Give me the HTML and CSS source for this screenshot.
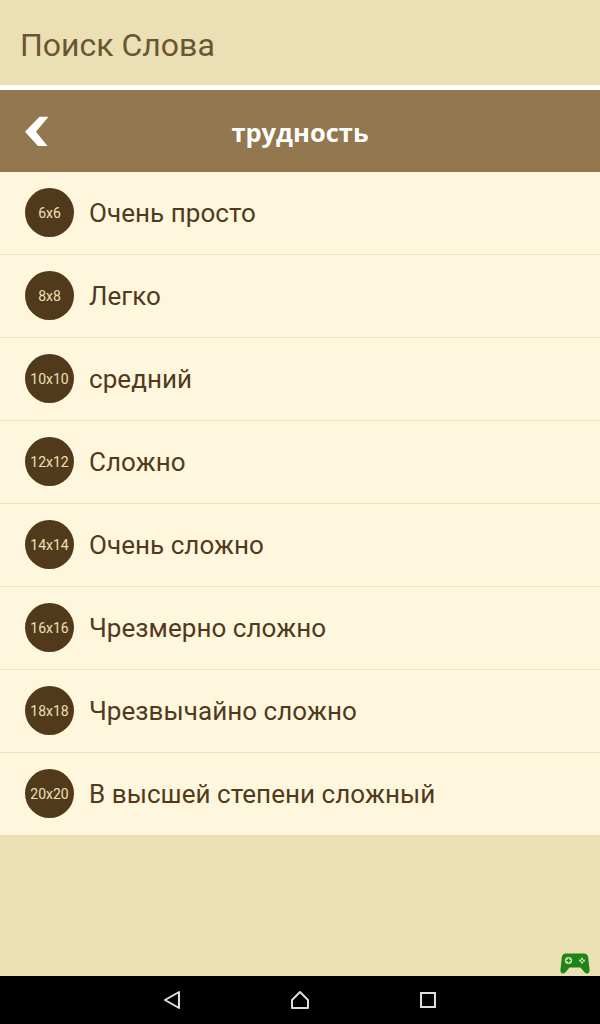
FILE: index.html
```html
<!DOCTYPE html>
<html lang="ru">

<head>
    <meta charset="UTF-8">
    <meta name="viewport" content="width=device-width, initial-scale=1.0">
    <title>Поиск Слова</title>
    <link rel="stylesheet" href="styles.css">
</head>

<body>
    <div class="screen">
        <div class="app-title">Поиск Слова</div>
        <div class="toolbar">
            <svg class="back-icon" width="26" height="31" viewBox="0 0 26 31">
                <path d="M15.5 0.7H24.5L12 15.7L23.5 30H14L1 15.7Z" fill="#fff" />
            </svg>
            <h2>трудность</h2>
        </div>
        <ul class="levels">
            <li><span class="badge">6x6</span>Очень просто</li>
            <li><span class="badge">8x8</span>Легко</li>
            <li><span class="badge">10x10</span>средний</li>
            <li><span class="badge">12x12</span>Сложно</li>
            <li><span class="badge">14x14</span>Очень сложно</li>
            <li><span class="badge">16x16</span>Чрезмерно сложно</li>
            <li><span class="badge">18x18</span>Чрезвычайно сложно</li>
            <li><span class="badge">20x20</span>В высшей степени сложный</li>
        </ul>
        <div class="footer">
            <svg class="game-icon" width="30" height="21" viewBox="0 0 30 21">
                <path d="M6 0.5H24C26.5 0.5 27.8 2 28.2 4.5L29.6 17C29.8 19.5 28.5 20.5 27 20.5C25.5 20.5 24.5 19.5 23 17.5L20.5 14.5H9.5L7 17.5C5.5 19.5 4.5 20.5 3 20.5C1.5 20.5 0.2 19.5 0.4 17L1.8 4.5C2.2 2 3.5 0.5 6 0.5Z" fill="#1f8519" />
                <circle cx="8.5" cy="7.5" r="3.6" fill="#d8e6b4" />
                <path d="M7.8 5.2H9.2V6.8H10.8V8.2H9.2V9.8H7.8V8.2H6.2V6.8H7.8Z" fill="#1f8519" />
                <g fill="#d8e6b4">
                    <rect x="21" y="4.8" width="2" height="2" />
                    <rect x="21" y="8.5" width="2" height="2" />
                    <rect x="19.1" y="6.6" width="2" height="2" />
                    <rect x="22.9" y="6.6" width="2" height="2" />
                </g>
            </svg>
        </div>
        <div class="nav-bar">
            <svg width="18" height="20" viewBox="0 0 18 20">
                <path d="M17 2V18L3 10Z" fill="none" stroke="#dedede" stroke-width="2" stroke-linejoin="round" />
            </svg>
            <svg width="20" height="20" viewBox="0 0 20 20">
                <path d="M2 18V10L10 2L18 10V18Z" fill="none" stroke="#dedede" stroke-width="2" stroke-linejoin="round" />
            </svg>
            <svg width="18" height="18" viewBox="0 0 18 18">
                <rect x="1" y="2" width="14" height="14" fill="none" stroke="#dedede" stroke-width="2" />
            </svg>
        </div>
    </div>
</body>

</html>
```

FILE: styles.css
```css
body {
    margin: 0;
    font-family: Roboto, sans-serif;
    background-color: #ebe0b4;
}

.screen {
    display: flex;
    flex-direction: column;
    height: 1024px;
    overflow: hidden;
}

.app-title {
    height: 85px;
    line-height: 90px;
    padding-left: 20px;
    font-size: 32px;
    color: #6b5533;
    background: #ebe0b4;
    border-bottom: 5px solid #fff;
}

.toolbar {
    display: flex;
    align-items: center;
    justify-content: center;
    height: 82px;
    background: #92774f;
}

.back-icon {
    position: absolute;
    left: 24px;
    top: 116px;
}

.toolbar h2 {
    margin: 0;
    padding-top: 2px;
    font-family: "Open Sans", sans-serif;
    font-size: 25.5px;
    font-weight: 700;
    color: #fff;
}

.levels {
    margin: 0;
    padding: 0;
    list-style: none;
    background: #fff6de;
}

.levels li {
    display: flex;
    align-items: center;
    gap: 15px;
    height: 82px;
    padding-left: 25px;
    font-size: 26px;
    letter-spacing: 0.05px;
    color: #503a1b;
    border-bottom: 1px solid #efe3ba;
}

.levels li:last-child {
    border-bottom: none;
}

.badge {
    box-sizing: border-box;
    display: flex;
    align-items: center;
    justify-content: center;
    width: 49px;
    height: 49px;
    margin-bottom: 2px;
    padding-top: 2px;
    border-radius: 50%;
    font-size: 14px;
    letter-spacing: 0;
    color: #ebe0b4;
    background: #503a1b;
}

.footer {
    flex: 1;
    display: flex;
    justify-content: flex-end;
    align-items: flex-end;
    padding: 0 10px 2px 0;
}

.nav-bar {
    display: flex;
    align-items: center;
    justify-content: center;
    gap: 110px;
    height: 48px;
    background: #000;
}
```
